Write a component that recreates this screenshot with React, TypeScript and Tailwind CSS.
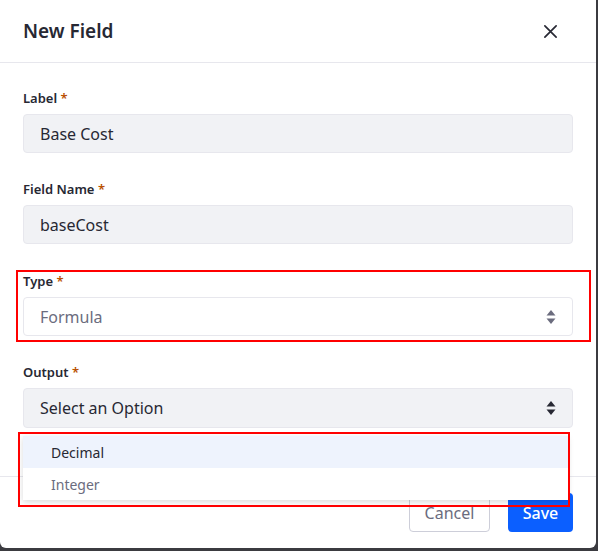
const font = { fontFamily: '"Noto Sans", "Liberation Sans", sans-serif' };

function SortIcon({ className }: { className: string }) {
  return (
    <svg viewBox="0 0 10 16" className={className} fill="currentColor">
      <path d="M5 1 L9.5 6.5 H0.5 Z" />
      <path d="M5 15 L9.5 9.5 H0.5 Z" />
    </svg>
  );
}

function FieldLabel({ text }: { text: string }) {
  return (
    <label className="mb-[6px] block text-[13px] font-semibold leading-5 text-[#272833]">
      {text} <span className="text-[#b95000]">*</span>
    </label>
  );
}

export default function App() {
  return (
    <div className="relative h-[551px] w-[598px] overflow-hidden bg-[#3b3b40]" style={font}>
      <div className="flex h-[548px] w-[596px] flex-col rounded-b-md bg-white">
        <div className="flex h-[63px] shrink-0 items-center justify-between border-b border-[#e7e7ed] pl-[23px] pr-[38px]">
          <h1 className="text-[19px] font-semibold text-[#272833]">New Field</h1>
          <svg viewBox="0 0 16 16" className="h-[15px] w-[15px] text-[#272833]" fill="none" stroke="currentColor" strokeWidth="1.8" strokeLinecap="round">
            <path d="M2 2 L14 14 M14 2 L2 14" />
          </svg>
        </div>

        <div className="flex-1 px-[23px] pt-[25px]">
          <div className="mb-[26px]">
            <FieldLabel text="Label" />
            <div className="flex h-[39px] items-center rounded-[4px] border border-[#e7e7ed] bg-[#f1f2f5] px-4 text-[16px] text-[#272833]">
              Base Cost
            </div>
          </div>
          <div className="mb-[27px]">
            <FieldLabel text="Field Name" />
            <div className="flex h-[39px] items-center rounded-[4px] border border-[#e7e7ed] bg-[#f1f2f5] px-4 text-[16px] text-[#272833]">
              baseCost
            </div>
          </div>
          <div className="mb-[26px]">
            <FieldLabel text="Type" />
            <div className="flex h-[39px] items-center justify-between rounded-[4px] border border-[#e7e7ed] bg-white pl-4 pr-[16px] text-[16px] text-[#6b6c7e]">
              Formula
              <SortIcon className="h-[16px] w-[10px] text-[#6b6c7e]" />
            </div>
          </div>
          <div>
            <FieldLabel text="Output" />
            <div className="flex h-[40px] items-center justify-between rounded-[4px] border border-[#e7e7ed] bg-[#f1f2f5] pl-4 pr-[16px] text-[16px] text-[#272833]">
              Select an Option
              <SortIcon className="h-[16px] w-[10px] text-[#272833]" />
            </div>
          </div>
        </div>

        <div className="flex h-[72px] shrink-0 items-center justify-end gap-[18px] border-t border-[#e7e7ed] pr-[23px]">
          <button className="h-[39px] w-[81px] rounded-[4px] border border-[#cdced9] bg-white text-[16px] text-[#6b6c7e]">Cancel</button>
          <button className="h-[39px] w-[65px] rounded-[4px] bg-[#0b5fff] text-[16px] font-medium text-white">Save</button>
        </div>
      </div>

      <div className="absolute left-[23px] top-[436px] w-[545px] bg-white shadow-[0_2px_6px_rgba(0,0,0,0.15)]">
        <div className="flex h-[32px] items-center bg-[#eef3fd] pl-[28px] text-[14px] text-[#272833]">Decimal</div>
        <div className="flex h-[32px] items-center pl-[28px] text-[14px] text-[#6b6c7e]">Integer</div>
      </div>

      <div className="pointer-events-none absolute left-[16px] top-[270px] h-[72px] w-[575px] border-2 border-[#ff0000]" />
      <div className="pointer-events-none absolute left-[18px] top-[432px] h-[75px] w-[552px] border-2 border-[#ff0000]" />
    </div>
  );
}
